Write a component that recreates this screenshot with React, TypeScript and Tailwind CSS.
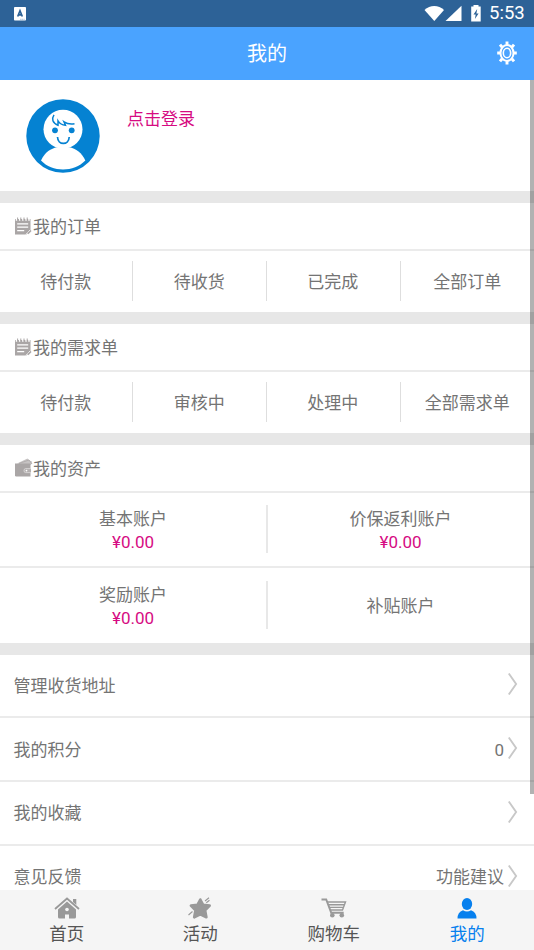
import { ReactNode } from "react"

type Account = {
  name: string
  amount?: string
}

type MenuRow = {
  label: string
  value?: string
}

const orders = ["待付款", "待收货", "已完成", "全部订单"]
const demands = ["待付款", "审核中", "处理中", "全部需求单"]

const accounts: Account[][] = [
  [{ name: "基本账户", amount: "¥0.00" }, { name: "价保返利账户", amount: "¥0.00" }],
  [{ name: "奖励账户", amount: "¥0.00" }, { name: "补贴账户" }],
]

const menu: MenuRow[] = [
  { label: "管理收货地址" },
  { label: "我的积分", value: "0" },
  { label: "我的收藏" },
  { label: "意见反馈", value: "功能建议" },
]

function StatusBar() {
  return (
    <div className="flex h-[27px] shrink-0 items-center justify-between bg-[#2d6297] pl-[14px] pr-[9px]">
      <svg width="12" height="14" viewBox="0 0 12 14">
        <rect width="12" height="13.5" rx="0.8" fill="#fff" />
        <path d="M3.7 9.5 6 3.7l2.3 5.8M4.5 7.8h3" fill="none" stroke="#2d6297" strokeWidth="1.7" />
        <path d="M6.2 12.3h4.400" stroke="#8ba8c6" strokeWidth="0.8" strokeDasharray="1.4 0.5" />
      </svg>
      <div className="flex items-center text-white">
        <svg width="60" height="18" viewBox="0 0 60 18" fill="currentColor">
          <path d="M0.5 5C6-.3 14.500-.3 20 5L10.300 16z" />
          <path d="M37.500 .8V16H21.500z" />
          <path d="M49.500 0h5v1.500h2.200V16.500H47.200v-15h2.300z" />
          <path d="M53.200 4 49.500 9.500h2.200l-.8 4.500L54.600 8.500h-2.200z" fill="#2d6297" />
        </svg>
        <span className="ml-[5px] w-[36px] whitespace-nowrap font-['Roboto',sans-serif] text-[18.5px] leading-[27px]">5:53</span>
      </div>
    </div>
  )
}

function GearIcon() {
  return (
    <svg width="20" height="24" viewBox="0 0 20 24" fill="none" stroke="#fff" className="mb-[2px]">
      <ellipse cx="10" cy="12" rx="6.500" ry="8" strokeWidth="2" />
      <ellipse cx="10" cy="12" rx="3.700" ry="4.700" strokeWidth="1.600" />
      <path d="M10 .4v3.400M10 20.200v3.400M.2 12h3M16.800 12h3M3 3.600l2.200 2.600M14.800 17.800l2.200 2.600M17 3.600l-2.200 2.600M5.200 17.800l-2.200 2.600" strokeWidth="2.900" />
    </svg>
  )
}

function Avatar() {
  return (
    <svg width="74" height="74" viewBox="0 0 74 74">
      <circle cx="37" cy="37" r="36.700" fill="#0582d2" />
      <path d="M15 61.500C19 53 25 49.500 31 48.300h12C50 49.500 56 54 59.300 61.500C48 73.500 26 73.500 15 61.500z" fill="#fff" />
      <circle cx="37" cy="30.300" r="19.500" fill="#fff" />
      <path d="M28 15.800C25.300 20 26.500 24 32 26.200V21.800C34 25 36.500 26 39.500 26.300L38 22.800C41.500 25.300 44.500 25.500 48.500 24.800" fill="none" stroke="#0582d2" strokeWidth="1.500" />
      <circle cx="29" cy="31.300" r="2.900" fill="#0582d2" />
      <circle cx="45.700" cy="31.300" r="2.900" fill="#0582d2" />
      <path d="M31.500 38C31.800 46.500 42.900 46.500 43.200 38" fill="none" stroke="#0582d2" strokeWidth="1.700" />
    </svg>
  )
}

function NoteIcon() {
  return (
    <svg width="17" height="18" viewBox="0 0 17 18">
      <path d="M0 2h15.500v11.500L11.500 17.500H0z" fill="#aaa6a6" />
      <path d="M1.500 0v3.800M4.700 0v3.800M7.900 0v3.800M11.100 0v3.800M14 0v3.800" stroke="#fff" strokeWidth="1.500" />
      <path d="M2.600 .5v3M5.800 .5v3M9 .5v3M12.200 .5v3" stroke="#aaa6a6" strokeWidth="1" />
      <path d="M2.200 6.800h11M2.200 10.200h11M2.200 13.600h7" stroke="#fff" strokeWidth="1.200" />
      <path d="M11 17.500l4-4.500" stroke="#fff" strokeWidth="1" />
      <path d="M12.800 16.600 16 13.500" stroke="#aaa6a6" strokeWidth="1.700" />
    </svg>
  )
}

function WalletIcon() {
  return (
    <svg width="18" height="19" viewBox="0 0 18 19">
      <path d="M2 5.500 12.500 .5 14.500 2.500 17 3.500 16 7z" fill="#c6c3c3" />
      <path d="M4 5.500 14 2l3 4" fill="none" stroke="#b2aeae" strokeWidth="1" />
      <path d="M0 5.500h15.500v13H1.200Q0 18.500 0 17.300z" fill="#aaa6a6" />
      <path d="M16 10.600h-5.500q-1.500 0-1.500 2t1.500 2H16" fill="#b4b0b0" stroke="#dedcdc" strokeWidth="0.800" />
      <circle cx="11.500" cy="12.600" r="0.900" fill="#fff" />
    </svg>
  )
}

function Chevron() {
  return (
    <svg width="10" height="24" viewBox="0 0 10 24" className="mb-[2px] ml-[4px]">
      <path d="M.8 1.500 8.100 12 .8 22.500" fill="none" stroke="#c8c8c8" strokeWidth="1.900" />
    </svg>
  )
}

function SectionTitle({ icon, children }: { icon: ReactNode; children: ReactNode }) {
  return (
    <div className="flex h-[48px] items-center border-b-2 border-[#ebebeb] pl-[15px]">
      <span className="flex w-[18px] justify-start">{icon}</span>
      <h2 className="pt-[2px]">{children}</h2>
    </div>
  )
}

function Tabs({ items }: { items: string[] }) {
  return (
    <div className="grid h-[61.500px] grid-cols-4 items-center">
      {items.map((item, index) => (
        <div key={index} className="-ml-px flex h-[40px] items-center justify-center border-r border-[#dedede] pt-px first:ml-0 first:mr-px last:ml-0 last:border-r-0">
          {item}
        </div>
      ))}
    </div>
  )
}

function Gap() {
  return <div className="h-[11.500px] shrink-0 bg-[#e7e7e7]" />
}

function NavItem({ label, active, children }: { label: string; active?: boolean; children: ReactNode }) {
  return (
    <div className={active ? "flex flex-col items-center text-[#0780ee]" : "flex flex-col items-center text-[#555]"}>
      <span className="flex h-[26px] items-center">{children}</span>
      <span className="text-[17.500px] leading-[26px]">{label}</span>
    </div>
  )
}

function App() {
  return (
    <div className="relative flex h-[950px] w-full flex-col overflow-hidden bg-white font-['Roboto','Noto_Sans_CJK_SC',sans-serif] text-[17px] leading-6 text-[#747474]">
      <StatusBar />
      <header className="grid h-[53px] shrink-0 grid-cols-[1fr_auto_1fr] items-center bg-[#4aa3ff] pr-[17px] pl-[17px]">
        <h1 className="col-start-2 text-[20px] text-white">我的</h1>
        <div className="flex justify-end">
          <GearIcon />
        </div>
      </header>

      <main className="min-h-0 flex-1 overflow-hidden">
        <div className="flex h-[111px] pl-[26px] pt-[19px]">
          <Avatar />
          <span className="ml-[27px] mt-[8px] text-[#d60b82]">点击登录</span>
        </div>
        <Gap />
        <SectionTitle icon={<NoteIcon />}>我的订单</SectionTitle>
        <Tabs items={orders} />
        <Gap />
        <SectionTitle icon={<NoteIcon />}>我的需求单</SectionTitle>
        <Tabs items={demands} />
        <Gap />
        <SectionTitle icon={<WalletIcon />}>我的资产</SectionTitle>
        <div className="divide-y-2 divide-[#ebebeb]">
          {accounts.map((row, index) => (
            <div key={index} className="grid h-[75.250px] grid-cols-2 items-center">
              {row.map((account) => (
                <div key={account.name} className="flex h-[48px] flex-col items-center justify-center border-[#e8e8e8] pt-[2px] first:-mr-px first:border-r-2">
                  <span>{account.name}</span>
                  {account.amount && <span className="-mt-px text-[#d60b82]">{account.amount}</span>}
                </div>
              ))}
            </div>
          ))}
        </div>
        <Gap />
        {menu.map((row) => (
          <div key={row.label} className="flex h-[63.800px] items-center justify-between border-b-2 border-[#ebebeb] pl-[13.500px] pr-[16px]">
            <span className="pt-px">{row.label}</span>
            <div className="flex items-center">
              <span className="pt-px">{row.value}</span>
              <Chevron />
            </div>
          </div>
        ))}
      </main>

      <div className="absolute right-0 top-[80px] h-[714px] w-[4px] bg-black/30" />

      <nav className="z-10 grid h-[60px] shrink-0 grid-cols-4 bg-[#f5f5f5] pt-[5px]">
        <NavItem label="首页">
          <svg width="26" height="22" viewBox="0 0 26 22" fill="#999">
            <path d="M1 12 13 1.500 25 12" fill="none" stroke="#999" strokeWidth="1.800" />
            <path d="M19 2h3.300v6L19 5z" />
            <path d="M13 4.500 22 12.500V20q0 1.500-1.500 1.500H15v-4h-4v4H5.500Q4 21.500 4 20v-7.500z" />
            <circle cx="13" cy="12.500" r="1.800" fill="#f5f5f5" />
          </svg>
        </NavItem>
        <NavItem label="活动">
          <svg width="24" height="23" viewBox="0 0 24 23">
            <path d="m12.300 2.500 2.700 5.200 6.700.9-4.600 4.700 1.300 7-6.100-3-6.100 3 1.300-7-4.600-4.700 6.700-.9z" fill="#999" stroke="#999" strokeWidth="2.600" strokeLinejoin="round" />
            <path d="m17 4 4-3.200M18.300 5.800l3.200-2.500M.5 18l4-3.500" stroke="#999" strokeWidth="1.100" />
          </svg>
        </NavItem>
        <NavItem label="购物车">
          <svg width="26" height="20" viewBox="0 0 26 20" fill="none" stroke="#999">
            <path d="M.5 1.500h4.700l5 13.200h12.500" strokeWidth="1.900" />
            <path d="M6 4h18.500l-3 8H9M7.500 6.700h16M8.500 9.400h14" strokeWidth="1.400" />
            <circle cx="11.300" cy="17.300" r="2.300" fill="#999" stroke="none" />
            <circle cx="20.800" cy="17.300" r="2.300" fill="#999" stroke="none" />
          </svg>
        </NavItem>
        <NavItem label="我的" active>
          <svg width="20" height="21" viewBox="0 0 20 21" fill="currentColor">
            <ellipse cx="10" cy="6" rx="5.200" ry="6" />
            <path d="M.5 20.500q0-6.500 5.500-8.300 4 2.800 8 0 5.500 1.800 5.500 8.300z" />
          </svg>
        </NavItem>
      </nav>
    </div>
  )
}

export default App
